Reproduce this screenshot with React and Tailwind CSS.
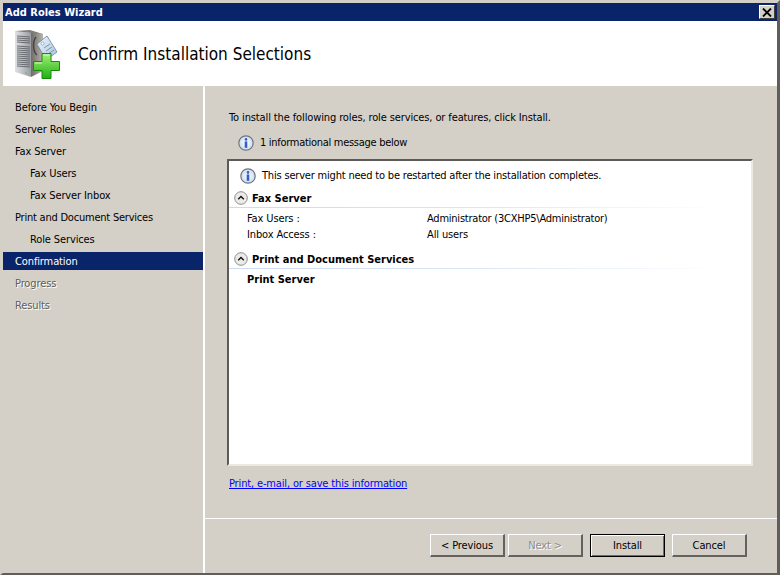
const nav = [
  { t: "Before You Begin" },
  { t: "Server Roles" },
  { t: "Fax Server" },
  { t: "Fax Users", sub: true },
  { t: "Fax Server Inbox", sub: true },
  { t: "Print and Document Services", tight: true },
  { t: "Role Services", sub: true },
  { t: "Confirmation", active: true },
  { t: "Progress", off: true },
  { t: "Results", off: true },
];

function WizardIcon() {
  return (
    <svg width="46" height="49" viewBox="0 0 46 49" className="block shrink-0 mt-[2px]">
      <defs>
        <linearGradient id="front" x1="0" x2="1" y1="0" y2="0">
          <stop offset="0" stopColor="#dfe1e4" />
          <stop offset="1" stopColor="#9a9ea4" />
        </linearGradient>
        <linearGradient id="side" x1="0" x2="1" y1="0" y2="0">
          <stop offset="0" stopColor="#6f6c67" />
          <stop offset="1" stopColor="#b7b3aa" />
        </linearGradient>
        <linearGradient id="plus" x1="0" x2="0" y1="0" y2="1">
          <stop offset="0" stopColor="#a4f07a" />
          <stop offset="1" stopColor="#1fb010" />
        </linearGradient>
        <linearGradient id="tag" x1="0" x2="1" y1="0" y2="1">
          <stop offset="0" stopColor="#f0f6fc" />
          <stop offset="1" stopColor="#a6c2dc" />
        </linearGradient>
      </defs>
      <polygon points="16,2 28,4 28,41 16,47" fill="url(#side)" />
      <polygon points="0,1 16,3 16,47 0,42" fill="url(#front)" />
      <polygon points="0,1 15,0 28,4 16,3" fill="#7f7e7b" />
      {[6, 8, 10, 12, 16, 18, 20, 22, 24, 26, 28, 30, 32, 34, 36].map((y) => (
        <line key={y} x1="2" x2="15" y1={y} y2={y + 1} stroke="#5d6268" strokeWidth="0.9" />
      ))}
      <circle cx="11" cy="43" r="1" fill="#58d04a" />
      <path d="M21 7 a5 10 0 0 0 1 18" fill="none" stroke="#45444a" strokeWidth="1.4" />
      <polygon points="22,14 32,6 42,22 31,30" fill="url(#tag)" stroke="#6d8fb0" strokeWidth="0.9" />
      <circle cx="27.5" cy="13.5" r="1.5" fill="#ffffff" stroke="#6d8fb0" strokeWidth="0.6" />
      <line x1="29" y1="18" x2="35" y2="14" stroke="#7895b3" />
      <line x1="31" y1="21" x2="37" y2="17" stroke="#7895b3" />
      <line x1="33" y1="24" x2="39" y2="20" stroke="#7895b3" />
      <path d="M27 23.5 h9 v8 h8.5 v9 h-8.5 v8 h-9 v-8 h-8.5 v-9 h8.5 z" fill="url(#plus)" stroke="#178a0d" strokeWidth="1" />
      <path d="M28.5 25 h6 M20 33 h7" stroke="#d8fbc2" strokeWidth="1" />
    </svg>
  );
}

function InfoIcon() {
  return (
    <svg width="16" height="16" viewBox="0 0 16 16" className="block shrink-0">
      <defs>
        <radialGradient id="ib" cx="0.5" cy="0.5" r="0.6">
          <stop offset="0" stopColor="#ffffff" />
          <stop offset="1" stopColor="#c3d3ea" />
        </radialGradient>
      </defs>
      <circle cx="8" cy="8" r="7.2" fill="url(#ib)" stroke="#6f7480" strokeWidth="1.2" />
      <circle cx="8" cy="4.4" r="1.3" fill="#2b62c4" />
      <rect x="6.7" y="6.4" width="2.6" height="6.4" fill="#2b62c4" />
    </svg>
  );
}

function CollapseIcon() {
  return (
    <svg width="14" height="14" viewBox="0 0 14 14" className="block shrink-0">
      <circle cx="7" cy="7" r="6.3" fill="#ecebe8" stroke="#8d8d8d" />
      <path d="M4.2 8.2 L7 5.4 L9.8 8.2" fill="none" stroke="#111" strokeWidth="1.4" />
    </svg>
  );
}

function Btn({ children, disabled, primary }) {
  const edge = primary
    ? "border border-black shadow-[inset_1px_1px_0_#fff,inset_-1px_-1px_0_#6f6d68]"
    : "border-t border-l border-t-white border-l-white border-r-2 border-b-2 border-r-[#63625e] border-b-[#63625e]";
  return (
    <div className={`w-[75px] h-[23px] pt-[2px] bg-[#d4d0c8] flex items-center justify-center ${edge} ${disabled ? "text-[#8f8d88] [text-shadow:1px_1px_0_#fff]" : "text-black"}`}>
      {children}
    </div>
  );
}

function Section({ title, children }) {
  return (
    <div>
      <div className="flex items-center gap-[4px] pl-[5px] h-[18px]">
        <CollapseIcon />
        <span className="font-bold text-black tracking-normal pt-[2px]">{title}</span>
      </div>
      <div className="h-px bg-gradient-to-r from-[#c9dcf3] via-[#d9e6f6] to-white mr-[30px]" />
      {children}
    </div>
  );
}

export default function App() {
  return (
    <div
      className="w-[780px] h-[575px] bg-[#d4d0c8] flex flex-col border-t-[3px] border-l-[3px] border-t-[#d4d0c8] border-l-[#d4d0c8] border-r-[3px] border-b-[2px] border-r-[#5f5e5a] border-b-[#5f5e5a] text-[11px] tracking-[-0.12px] text-black overflow-hidden"
      style={{ fontFamily: '"DejaVu Sans Condensed", "DejaVu Sans", sans-serif', fontStretch: "condensed" }}
    >
      <div className="h-[18px] bg-[#0a246a] flex items-center justify-between pr-[2px] shrink-0">
        <span className="pl-[2px] font-bold text-white leading-none tracking-normal">Add Roles Wizard</span>
        <div className="w-[16px] h-[14px] bg-[#d4d0c8] border-t border-l border-white border-r border-b border-r-[#404040] border-b-[#404040] flex items-center justify-center">
          <svg width="10" height="9" viewBox="0 0 10 9">
            <path d="M1 0.5 L9 8.5 M9 0.5 L1 8.5" stroke="#000" strokeWidth="1.8" />
          </svg>
        </div>
      </div>
      <div className="h-[65px] bg-white flex items-center pl-[12px] gap-[17px] shrink-0">
        <WizardIcon />
        <span className="text-[17px] text-black tracking-normal pt-[3px]">Confirm Installation Selections</span>
      </div>
      <div className="flex-1 flex min-h-0">
        <div className="w-[200px] pt-[12px] flex flex-col gap-[4px] shrink-0">
          {nav.map((n) => (
            <div
              key={n.t}
              className={`h-[18px] pt-[2px] flex items-center ${n.sub ? "pl-[27px]" : "pl-[12px]"} ${n.tight ? "tracking-[-0.22px]" : ""} ${n.active ? "bg-[#0a246a] text-white" : n.off ? "text-[#5f5d58] [text-shadow:1px_1px_0_#fff]" : "text-black"}`}
            >
              {n.t}
            </div>
          ))}
        </div>
        <div className="w-[2px] bg-white shrink-0" />
        <div className="flex-1 flex flex-col min-w-0">
          <div className="flex-1 pl-[24px] pt-[23px]">
            <div className="h-[18px] flex items-center">To install the following roles, role services, or features, click Install.</div>
            <div className="h-[20px] mt-[6px] flex items-center gap-[6px] pl-[9px]">
              <InfoIcon />
              <span className="tracking-[-0.29px]">1 informational message below</span>
            </div>
            <div className="mt-[6px] ml-[-2px] w-[526px] h-[307px] bg-white border-t-2 border-l-2 border-t-[#5c5b57] border-l-[#5c5b57] border-r-2 border-b-2 border-r-[#ece9e3] border-b-[#ece9e3] shrink-0">
              <div className="h-[24px] mt-[3px] flex items-center gap-[6px] pl-[11px]">
                <InfoIcon />
                <span className="tracking-[-0.19px]">This server might need to be restarted after the installation completes.</span>
              </div>
              <div className="mt-[1px]">
                <Section title="Fax Server">
                  <div className="mt-[3px] grid grid-cols-[180px_1fr] pl-[18px] leading-[16px]">
                    <span>Fax Users :</span>
                    <span className="tracking-[-0.23px]">Administrator (3CXHP5\Administrator)</span>
                    <span>Inbox Access :</span>
                    <span>All users</span>
                  </div>
                </Section>
              </div>
              <div className="mt-[7px]">
                <Section title="Print and Document Services">
                  <div className="mt-[3px] pl-[18px] font-bold tracking-normal leading-[16px]">Print Server</div>
                </Section>
              </div>
            </div>
            <div className="mt-[10px] text-[#0000ff] underline leading-[16px] tracking-[-0.15px]">Print, e-mail, or save this information</div>
          </div>
          <div className="h-px bg-white shrink-0" />
          <div className="h-[54px] shrink-0 flex justify-end pt-[15px] pr-[30px]">
            <Btn>&lt; Previous</Btn>
            <div className="w-[3px]" />
            <Btn disabled>Next &gt;</Btn>
            <div className="w-[7px]" />
            <Btn primary>Install</Btn>
            <div className="w-[7px]" />
            <Btn>Cancel</Btn>
          </div>
        </div>
      </div>
    </div>
  );
}
